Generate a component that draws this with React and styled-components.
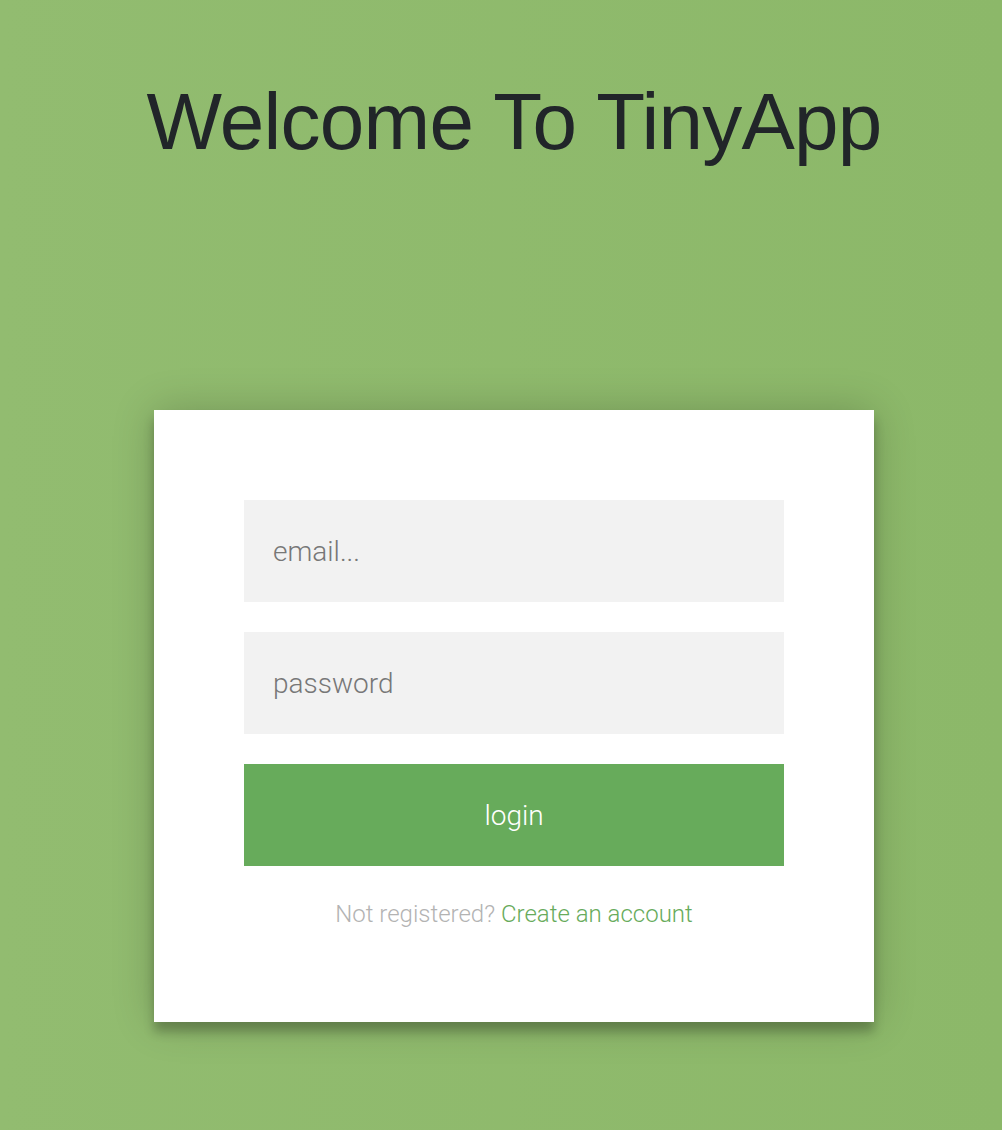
import React from "react";
import styled, { createGlobalStyle } from "styled-components";

const Global = createGlobalStyle`
  html, body { margin: 0; padding: 0; }
  body {
    font-family: Roboto, "Liberation Sans", sans-serif;
    background: linear-gradient(to right, #92bc70, #8cb869);
    min-height: 1130px;
  }
  * { box-sizing: border-box; }
`;

const Page = styled.div`
  min-height: 1130px;
  padding: 74px 0 0 26px;
  display: flex;
  flex-direction: column;
  align-items: center;
`;

const Title = styled.h1`
  margin: 0;
  font-family: "Liberation Sans", Arial, sans-serif;
  font-weight: 500;
  font-size: 80px;
  line-height: 96px;
  letter-spacing: -0.75px;
  color: #212529;
  text-align: center;
`;

const Card = styled.form`
  margin-top: 240px;
  width: 720px;
  padding: 90px;
  background: #ffffff;
  box-shadow: 0 0 40px 0 rgba(0, 0, 0, 0.2), 0 10px 10px 0 rgba(0, 0, 0, 0.24);
  display: flex;
  flex-direction: column;
  gap: 30px;
`;

const Input = styled.input`
  width: 100%;
  height: 102px;
  border: 0;
  outline: 0;
  background: #f2f2f2;
  padding: 0 29px;
  font-family: Roboto, sans-serif;
  font-weight: 300;
  font-size: 28px;
  color: #333;
  &::placeholder { color: #777777; }
`;

const Button = styled.button`
  width: 100%;
  height: 102px;
  border: 0;
  background: #67ab5b;
  color: #ffffff;
  font-family: Roboto, sans-serif;
  font-weight: 300;
  font-size: 28px;
  cursor: pointer;
`;

const Message = styled.p`
  margin: 0;
  text-align: center;
  font-family: Roboto, sans-serif;
  font-weight: 300;
  font-size: 24px;
  line-height: 36px;
  color: #b3b3b3;
`;

const Link = styled.a`
  color: #67ab5b;
  text-decoration: none;
`;

export default function App() {
  return (
    <>
      <Global />
      <Page>
        <Title>Welcome To TinyApp</Title>
        <Card onSubmit={(e) => e.preventDefault()}>
          <Input type="text" placeholder="email..." />
          <Input type="password" placeholder="password" />
          <Button type="submit">login</Button>
          <Message>
            Not registered? <Link href="#">Create an account</Link>
          </Message>
        </Card>
      </Page>
    </>
  );
}
